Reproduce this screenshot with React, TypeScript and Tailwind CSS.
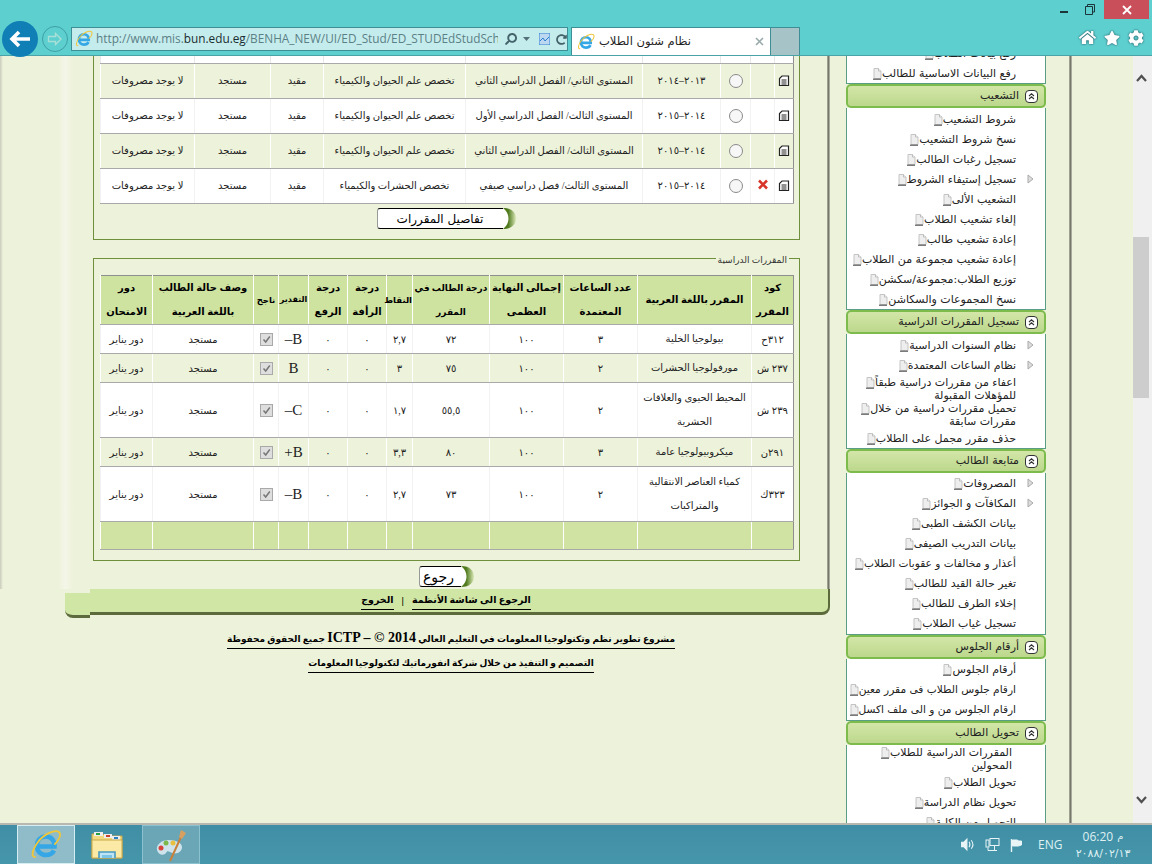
import React from "react";
import { FaHome, FaStar, FaCog, FaSearch, FaRedoAlt } from "react-icons/fa";

const SERIF = "[font-family:'Liberation_Serif','DejaVu_Sans',serif]";

function IE({ size }: { size: number }) {
  return (
    <svg width={size} height={size} viewBox="0 0 32 32" fill="none">
      <path d="M8.5 17.5H24.5C25 11 20.5 7.5 16 7.5C10.5 7.5 7 11.5 7 17C7 22.5 11 26 16 26C19.5 26 22.5 24.5 24 21.5" stroke="#35a7e6" strokeWidth="4.6" />
      <path d="M5 28C1 28 2 21 8 13C14 5 25 0 29 3C32 6 28 12 25 15" stroke="#f0c63a" strokeWidth="1.8" strokeLinecap="round" />
    </svg>
  );
}

function PageIcon() {
  return (
    <svg className="inline-block align-top mt-[1px]" width="9" height="12" viewBox="0 0 9 12">
      <path d="M1 .5H5.5L8 3V10.5H1Z" fill="#eeeeee" stroke="#c4c4c4" />
      <path d="M5.5 .5V3H8" fill="#ffffff" stroke="#bdbdbd" />
      <path d="M0 11.2H8" stroke="#5a5a5a" strokeWidth="1.2" />
    </svg>
  );
}

function DocIcon() {
  return (
    <svg className="mx-auto block" width="12" height="12" viewBox="0 0 12 12" fill="none">
      <path d="M4 1H10.5V10.5H1.5V3.5Z" stroke="#222" strokeWidth="1.2" fill="#fff" />
      <path d="M3.5 5H8.5M3.5 7H8.5M3.5 9H8.5" stroke="#222" strokeWidth="1" />
    </svg>
  );
}

function Crescent({ id }: { id: string }) {
  return (
    <svg className="block shrink-0" width="20" height="21" viewBox="0 0 20 21">
      <defs>
        <linearGradient id={id} x1="0.4" y1="0" x2="1" y2="0">
          <stop offset="0" stopColor="#4f7a1e" />
          <stop offset="1" stopColor="#dbe9b8" />
        </linearGradient>
      </defs>
      <path d="M0 0H6C10 3 11.5 7 11.5 10.5C11.5 14 10 18 6 21H0Z" fill="#ffffff" />
      <path d="M0 .5H6M0 20.5H6" stroke="#000" />
      <path d="M6 0C15 0 19 5 19 10.5C19 16 15 21 6 21C10 18 11.5 14 11.5 10.5C11.5 7 10 3 6 0Z" fill={`url(#${id})`} />
    </svg>
  );
}

function PillButton({ label, w, cls, id }: { label: string; w: string; cls: string; id: string }) {
  return (
    <button dir="ltr" className={`flex h-[21px] ${w} mx-auto`}>
      <span dir="rtl" className={`flex-1 h-full bg-white border-y border-l border-black border-l-[#999] rounded-l-[3px] leading-[20px] text-black text-center [font-family:'DejaVu_Sans',sans-serif] ${cls}`}>
        {label}
      </span>
      <Crescent id={id} />
    </button>
  );
}

const t1Widths = [19, 24, 30, 78, 177, 142, 53, 76, 94];
const t1Rows = [
  { y: "٢٠١٣–٢٠١٤", l: "المستوى الثاني/ الفصل الدراسي الثاني", s: "تخصص علم الحيوان والكيمياء", x: false },
  { y: "٢٠١٤–٢٠١٥", l: "المستوى الثالث/ الفصل الدراسي الأول", s: "تخصص علم الحيوان والكيمياء", x: false },
  { y: "٢٠١٤–٢٠١٥", l: "المستوى الثالث/ الفصل الدراسي الثاني", s: "تخصص علم الحيوان والكيمياء", x: false },
  { y: "٢٠١٤–٢٠١٥", l: "المستوى الثالث/ فصل دراسي صيفي", s: "تخصص الحشرات والكيمياء", x: true },
];

const t2Widths = [42, 114, 74, 74, 77, 26, 39, 39, 30, 25, 101, 52];
const t2Head: { t: React.ReactNode; c?: string }[] = [
  { t: <>كود<br />المقرر</> },
  { t: "المقرر باللغة العربية" },
  { t: <>عدد الساعات<br />المعتمدة</> },
  { t: <>إجمالى النهاية<br />العظمى</> },
  { t: <>درجة الطالب في<br />المقرر</>, c: "text-[9px] whitespace-nowrap" },
  { t: "النقاط", c: "text-[8.5px]" },
  { t: <>درجة<br />الرأفة</> },
  { t: <>درجة<br />الرفع</> },
  { t: "التقدير", c: "text-[8px]" },
  { t: "ناجح", c: "text-[8.5px]" },
  { t: <>وصف حالة الطالب<br />باللغة العربية</> },
  { t: <>دور<br />الامتحان</> },
];
const t2Rows = [
  { h: "h-[29px]", c: "٣١٢ح", n: "بيولوجيا الخلية", hrs: "٣", g: "٧٢", p: "٢,٧", e: "B–" },
  { h: "h-[29px]", c: "٢٣٧ ش", n: "مورفولوجيا الحشرات", hrs: "٢", g: "٧٥", p: "٣", e: "B" },
  { h: "h-[55px]", c: "٢٣٩ ش", n: "المحيط الحيوى والعلاقات الحشرية", hrs: "٢", g: "٥٥,٥", p: "١,٧", e: "C–" },
  { h: "h-[29px]", c: "٢٩١ن", n: "ميكروبيولوجيا عامة", hrs: "٣", g: "٨٠", p: "٣,٣", e: "B+" },
  { h: "h-[55px]", c: "٣٢٣ك", n: "كمياء العناصر الانتقالية والمتراكبات", hrs: "٢", g: "٧٣", p: "٢,٧", e: "B–" },
];

const cell = "border-b border-l border-b-[#a9a9a9] p-0 text-center";

function Table1() {
  return (
    <table dir="rtl" className={`w-[693px] table-fixed border-collapse border border-t-0 border-[#8f8f8f] text-[10px] text-[#222] ${SERIF}`}>
      <colgroup>
        {t1Widths.map((w, i) => (
          <col key={i} style={{ width: w }} />
        ))}
      </colgroup>
      <tbody>
        <tr className="bg-white">
          {t1Widths.map((_, i) => (
            <td key={i} className={`${cell} h-[7px] border-l-[#e8e8e8]`} />
          ))}
        </tr>
        {t1Rows.map((r, i) => {
          const b = i % 2 === 0 ? "bg-[#edf2da] border-l-white" : "bg-white border-l-[#f2f2f2]";
          const cl = `${cell} ${b}`;
          return (
            <tr key={i} className="h-[35px]">
              <td className={cl}><DocIcon /></td>
              <td className={cl}>
                {r.x && (
                  <svg className="mx-auto block -mt-[2px]" width="12" height="11" viewBox="0 0 12 11">
                    <path d="M2 1.5L10 9.5M10 1.5L2 9.5" stroke="#d8352a" strokeWidth="2.6" />
                  </svg>
                )}
              </td>
              <td className={cl}><span className="block mx-auto w-[14px] h-[14px] rounded-full border border-[#8a8a8a] bg-[#f7f7f7]" /></td>
              <td className={cl}>{r.y}</td>
              <td className={cl}>{r.l}</td>
              <td className={cl}>{r.s}</td>
              <td className={cl}>مقيد</td>
              <td className={cl}>مستجد</td>
              <td className={cl}>لا يوجد مصروفات</td>
            </tr>
          );
        })}
      </tbody>
    </table>
  );
}

function Table2() {
  return (
    <table dir="rtl" className={`w-[693px] table-fixed border-collapse border border-[#8f8f8f] text-[10px] text-[#222] ${SERIF}`}>
      <colgroup>
        {t2Widths.map((w, i) => (
          <col key={i} style={{ width: w }} />
        ))}
      </colgroup>
      <thead>
        <tr className="h-[49px] bg-[#cfe3a0]">
          {t2Head.map((h, i) => (
            <th key={i} className={`${cell} border-l-white font-bold leading-[24px] text-black ${h.c ?? "text-[10px]"}`}>{h.t}</th>
          ))}
        </tr>
      </thead>
      <tbody>
        {t2Rows.map((r, i) => {
          const b = i % 2 === 0 ? "bg-white border-l-[#f2f2f2]" : "bg-[#edf2da] border-l-white";
          const cl = `${cell} ${b}`;
          return (
            <tr key={i} className={r.h}>
              <td className={cl}>{r.c}</td>
              <td className={`${cl} leading-[24px]`}>{r.n}</td>
              <td className={cl}>{r.hrs}</td>
              <td className={cl}>١٠٠</td>
              <td className={cl}>{r.g}</td>
              <td className={cl}>{r.p}</td>
              <td className={cl}>٠</td>
              <td className={cl}>٠</td>
              <td className={`${cl} text-[15px]`}>{r.e}</td>
              <td className={cl}>
                <span className="mx-auto flex items-center justify-center w-[13px] h-[13px] bg-[#dedede] border border-[#a9a9a9]">
                  <svg width="9" height="9" viewBox="0 0 9 9" fill="none"><path d="M1.5 4.5L3.7 7L7.8 1.5" stroke="#777" strokeWidth="1.5" /></svg>
                </span>
              </td>
              <td className={cl}>مستجد</td>
              <td className={cl}>دور يناير</td>
            </tr>
          );
        })}
        <tr className="h-[28px] bg-[#d0e3a2]">
          {t2Widths.map((_, i) => (
            <td key={i} className={`${cell} border-l-white`} />
          ))}
        </tr>
      </tbody>
    </table>
  );
}

type Item = { t: React.ReactNode; arrow?: boolean; h?: string; pr?: string; fs?: string };

function Row({ it }: { it: Item }) {
  return (
    <div className={`flex items-center ${it.h ?? "h-[20px]"} ${it.fs ?? "text-[11px]"} leading-[13px] text-[#222]`}>
      <span className={`${it.pr ?? "w-[29px]"} shrink-0 flex justify-center`}>
        {it.arrow && (
          <svg width="7" height="10" viewBox="0 0 7 10"><path d="M1 1L6 5L1 9Z" fill="#ddd" stroke="#aaa" /></svg>
        )}
      </span>
      <span className="whitespace-nowrap">{it.t}</span>
    </div>
  );
}

function Section({ title, items, tight }: { title?: string; items: Item[]; tight?: boolean }) {
  return (
    <div>
      {title && (
        <div className="h-[24px] flex items-center gap-[6px] pr-[6px] rounded-[5px] border-2 border-[#7cbb4c] bg-linear-to-b from-[#d3e6a8] to-[#bcd88c] text-[11px] text-[#222]">
          <span className="w-[13px] h-[13px] rounded-[4px] border border-[#333] bg-white flex items-center justify-center">
            <svg width="7" height="7" viewBox="0 0 7 7"><path d="M1 3L3.5 .8L6 3M1 6L3.5 3.8L6 6" fill="none" stroke="#333" strokeWidth="1.1" /></svg>
          </span>
          <span>{title}</span>
        </div>
      )}
      <div className={`border-x border-b border-[#5a9e85] bg-white ${tight ? "pb-[1px]" : "pt-[1px]"}`}>
        {items.map((it, i) => (
          <Row key={i} it={it} />
        ))}
      </div>
    </div>
  );
}

const P = () => <PageIcon />;
const it = (s: string, extra: Partial<Item> = {}): Item => ({ t: <>{s}<P /></>, ...extra });

function Sidebar() {
  return (
    <div className="w-[200px] h-[767px] overflow-hidden shrink-0" dir="rtl">
      <div className="-mt-[14px] [font-family:'DejaVu_Sans',sans-serif]">
        <Section items={[it("رفع بيانات الطلاب"), it("رفع البيانات الاساسية للطالب")]} />
        <Section title="التشعيب" items={[
          it("شروط التشعيب"), it("نسخ شروط التشعيب"), it("تسجيل رغبات الطالب"), it("تسجيل إستيفاء الشروط", { arrow: true }),
          it("التشعيب الألى"), it("إلغاء تشعيب الطلاب"), it("إعادة تشعيب طالب"), it("إعادة تشعيب مجموعة من الطلاب"),
          it("توزيع الطلاب:مجموعة/سكشن"), it("نسخ المجموعات والسكاشن"),
        ]} />
        <Section title="تسجيل المقررات الدراسية" items={[
          it("نظام السنوات الدراسية", { arrow: true }), it("نظام الساعات المعتمدة", { arrow: true }),
          { t: <>اعفاء من مقررات دراسية طبقاً<P /><br />للمؤهلات المقبولة</>, h: "h-[27px]" },
          { t: <>تحميل مقررات دراسية من خلال<P /><br />مقررات سابقة</>, h: "h-[26px]" },
          it("حذف مقرر مجمل على الطلاب"),
        ]} />
        <Section tight title="متابعة الطالب" items={[
          it("المصروفات", { arrow: true }), it("المكافآت و الجوائز", { arrow: true }), it("بيانات الكشف الطبى"), it("بيانات التدريب الصيفى"),
          it("أعذار و مخالفات و عقوبات الطلاب", { fs: "text-[10.6px]" }), it("تغير حالة القيد للطالب"), it("إخلاء الطرف للطالب"), it("تسجيل غياب الطلاب"),
        ]} />
        <Section tight title="أرقام الجلوس" items={[
          it("أرقام الجلوس"), it("ارقام جلوس الطلاب فى مقرر معين", { fs: "text-[10.6px]" }), it("ارقام الجلوس من و الى ملف اكسل", { fs: "text-[10.6px]" }),
        ]} />
        <Section title="تحويل الطالب" items={[
          { t: <>المقررات الدراسية للطلاب<P /><br />المحولين</>, h: "h-[26px]", pr: "w-[33px]" },
          it("تحويل الطلاب"), it("تحويل نظام الدراسة"), it("التحويل من الكلية"),
        ]} />
      </div>
    </div>
  );
}

const rule = "w-[3px] shrink-0 bg-linear-to-r from-[#b4b7a5] via-[#75776b] to-[#c4c7b5]";

export default function App() {
  return (
    <div className="w-[1152px] h-[864px] overflow-hidden bg-[#5ecfcf] flex flex-col" dir="ltr">
      {/* title row */}
      <div className="h-[27px] flex justify-end shrink-0 pr-[3px]">
        <div className="w-[8px] h-[2px] bg-[#1b3538] mt-[11px] mr-[17px]" />
        <svg className="mt-[4px] mr-[9px]" width="10" height="11" viewBox="0 0 10 11" fill="none" stroke="#1b3538"><path d="M2.5 2.5V.5H9.5V8H7.5" /><path d="M.5 2.5H7.5V10.5H.5Z" /></svg>
        <div className="w-[45px] h-[19px] bg-[#c9505a] flex items-center justify-center">
          <svg width="10" height="10" viewBox="0 0 10 10"><path d="M1 1L9 9M9 1L1 9" stroke="#fff" strokeWidth="1.8" /></svg>
        </div>
      </div>
      {/* toolbar row */}
      <div className="h-[29px] shrink-0 flex items-start border-b border-[#4aa3a6]">
        <div className="w-[36px] h-[36px] ml-[2px] -mt-[6px] rounded-full bg-[#0f7fb5] flex items-center justify-center relative z-10">
          <svg width="22" height="18" viewBox="0 0 22 18" fill="none"><path d="M10 2L3 9L10 16M3 9H21" stroke="#fff" strokeWidth="3.6" /></svg>
        </div>
        <div className="w-[26px] h-[26px] ml-[4px] -mt-[1px] rounded-full border border-[#3d9fa5] flex items-center justify-center">
          <svg width="16" height="14" viewBox="0 0 16 14" fill="none"><path d="M8.5 1.5L14 7L8.5 12.5V9.5H1.5V4.5H8.5Z" stroke="#a8e0d8" strokeWidth="1.4" /></svg>
        </div>
        <div className="w-[497px] h-[24px] ml-[3px] flex items-center border border-[#3d8f95] bg-[#c5ecec]">
          <span className="w-[24px] flex justify-center shrink-0"><IE size={18} /></span>
          <span className="w-[402px] overflow-hidden whitespace-nowrap text-[11.8px] text-[#5a8086] [font-family:'Open_Sans',sans-serif]">
            http://www.mis.<span className="text-[#1a2c30]">bun.edu.eg</span>/BENHA_NEW/UI/ED_Stud/ED_STUDEdStudSchc
          </span>
          <span className="ml-[7px] flex items-center gap-[6px] text-[#44626a]">
            <FaSearch size={12} className="-scale-x-100" />
            <svg width="7" height="4" viewBox="0 0 7 4"><path d="M0 0H7L3.5 4Z" fill="#55707a" /></svg>
            <svg className="ml-[3px]" width="11" height="12" viewBox="0 0 11 12"><rect width="11" height="12" fill="#bcd8f0" stroke="#2f7fd0" /><path d="M1 8L4 5L6 8L10 4" stroke="#2f7fd0" fill="none" /></svg>
            <FaRedoAlt size={11} />
          </span>
        </div>
        <div className="w-[200px] h-[28px] ml-[3px] flex items-center bg-white border border-b-0 border-[#3d8f95] pl-[5px] pr-[6px]">
          <IE size={18} />
          <span dir="rtl" className="ml-[4px] text-[11.5px] text-[#222] [font-family:'DejaVu_Sans',sans-serif]">نظام شئون الطلاب</span>
          <svg className="ml-auto" width="9" height="9" viewBox="0 0 9 9"><path d="M1 1L8 8M8 1L1 8" stroke="#9aa" strokeWidth="1.6" /></svg>
        </div>
        <div className="w-[29px] h-[28px] bg-[#a6c4c8] border border-l-0 border-b-0 border-[#3d8f95]" />
        <div className="ml-auto flex items-center gap-[8px] pr-[8px] mt-[2px] text-white">
          <FaHome size={17} className="drop-shadow-[0_0_1px_#1b4a55]" />
          <FaStar size={16} className="drop-shadow-[0_0_1px_#1b4a55]" />
          <FaCog size={16} className="drop-shadow-[0_0_1px_#1b4a55]" />
        </div>
      </div>

      {/* content */}
      <div className="h-[767px] shrink-0 flex bg-[#edf2da]">
        <div className="w-[830px] shrink-0 flex flex-col">
          <div className="h-[533px] flex shrink-0 overflow-hidden">
            <div className="w-[93px] shrink-0 bg-[linear-gradient(to_right,#c9ccbb_0,#edf2da_3px,#edf2da_58px,#f4f6e8_65px,#edf2da_74px)]" />
            <div className="w-[707px] shrink-0">
              <div className="border-x border-b border-[#6f8f3c] px-[6px] h-[184px]">
                <Table1 />
                <div className="mt-[4px]"><PillButton id="cr1" label="تفاصيل المقررات" w="w-[140px]" cls="text-[12px] pl-[6px]" /></div>
              </div>
              <div className={`relative mt-[18px] border border-[#6f8f3c] px-[6px] pt-[16px] pb-[10px] ${SERIF}`}>
                <span dir="rtl" className="absolute -top-[6px] right-[10px] bg-[#edf2da] px-[2px] text-[9px] leading-[14px] text-[#333]">المقررات الدراسية</span>
                <Table2 />
              </div>
              <div className="mt-[5px]"><PillButton id="cr2" label="رجوع" w="w-[56px]" cls="text-[14px] pl-[3px]" /></div>
            </div>
            <div className="w-[27px] shrink-0" />
            <div className={rule} />
          </div>
          <div className="h-[29px] flex items-start shrink-0">
            <div className="w-[25px] ml-[65px] mt-[4px] h-[25px] rounded-bl-[8px] bg-[#cfe6a5] border-b-[3px] border-[#5d6b3c]" />
            <div dir="rtl" className={`h-[26px] flex-1 rounded-br-[8px] bg-[#cfe6a5] border-b-[3px] border-r-[2px] border-[#5d6b3c] flex items-start justify-center gap-[8px] pr-[26px] text-[9.5px] font-bold text-black ${SERIF}`}>
              <span className="mt-[2px] border-b border-black leading-[18px]">الرجوع الى شاشة الأنظمة</span>
              <span className="mt-[2px] leading-[18px] text-[11px]">|</span>
              <span className="mt-[2px] border-b border-black leading-[18px]">الخروج</span>
            </div>
          </div>
          <div dir="rtl" className={`flex flex-col items-center text-[9px] font-bold text-black pt-[12px] pl-[72px] gap-[6px] ${SERIF}`}>
            <span className="border-b border-black pb-[1px] leading-[16px]">مشروع تطوير نظم وتكنولوجيا المعلومات في التعليم العالي <span className="text-[14px]">ICTP – © 2014</span> جميع الحقوق محفوظة</span>
            <span className="border-b border-black pb-[1px] leading-[16px]">التصميم و التنفيذ من خلال شركة انفورماتيك لتكنولوجيا المعلومات</span>
          </div>
        </div>

        <div className="w-[242px] shrink-0 flex pl-[16px]">
          <Sidebar />
          <div className="w-[23px] shrink-0" />
          <div className={rule} />
        </div>

        <div className="w-[61px] shrink-0" />

        <div className="w-[19px] shrink-0 bg-[#f0f0f0] flex flex-col pr-[3px] items-center">
          <svg className="mt-[18px]" width="11" height="8" viewBox="0 0 11 8" fill="none"><path d="M1 7L5.5 2L10 7" stroke="#505050" strokeWidth="2.2" /></svg>
          <div className="w-[16px] h-[161px] mt-[155px] bg-[#cdcdcd]" />
          <svg className="mt-auto mb-[19px]" width="11" height="8" viewBox="0 0 11 8" fill="none"><path d="M1 1L5.5 6L10 1" stroke="#505050" strokeWidth="2.2" /></svg>
        </div>
      </div>

      {/* taskbar */}
      <div className="h-[41px] shrink-0 border-t-2 border-[#b8b8b0] bg-linear-to-b from-[#3f8ea5] to-[#4696ab] flex items-stretch [font-family:'Open_Sans',sans-serif]">
        <div className="w-[58px] ml-[17px] bg-[#8fbcc8] border border-[#d6eef2] flex items-center justify-center"><IE size={32} /></div>
        <div className="w-[34px] ml-[16px] flex items-center">
          <svg width="32" height="30" viewBox="0 0 32 30">
            <path d="M1 4H12L14 6H31V28H1Z" fill="#f2d980" stroke="#c9a94a" />
            <rect x="3" y="2" width="9" height="4" fill="#eee" />
            <rect x="5" y="3" width="4" height="2" fill="#22a040" />
            <rect x="13" y="4" width="8" height="4" fill="#eee" />
            <rect x="15" y="5" width="4" height="2" fill="#c84030" />
            <rect x="21" y="6" width="8" height="4" fill="#eee" />
            <rect x="23" y="7" width="4" height="2" fill="#2a80c0" />
            <path d="M1 10H31V28H1Z" fill="#fbe9a6" stroke="#c9a94a" />
            <path d="M8 28V22H24V28" fill="#bde4f5" stroke="#4a9ac0" strokeWidth="1.6" />
            <path d="M11 28V25H21V28" fill="#7cc4e8" />
          </svg>
        </div>
        <div className="w-[58px] ml-[17px] bg-[#6aa6b6] border border-[#8cc2cf] flex items-center justify-center">
          <svg width="32" height="34" viewBox="0 0 32 34">
            <path d="M14 12C6 12 1 17 2 22C3 27 9 28 11 25C12 23 13 23 15 24C20 27 27 25 27 19C27 15 21 12 14 12Z" fill="#cfe3ec" />
            <circle cx="6" cy="20" r="2.5" fill="#d8443c" />
            <circle cx="11" cy="15" r="2.5" fill="#7cb84a" />
            <circle cx="18" cy="15" r="2.5" fill="#e8c040" />
            <path d="M15 33L26 9" stroke="#c8803a" strokeWidth="2" />
            <path d="M24 9L26 2L31 5L27 11Z" fill="#d8a060" />
          </svg>
        </div>
        <div className="ml-auto flex items-center text-[#dff0f2]">
          <svg width="16" height="15" viewBox="0 0 14 14" fill="none" stroke="#e8f4f6"><path d="M1 5H3L6 2V12L3 9H1Z" fill="#e8f4f6" /><path d="M8 4.5C9 6 9 8 8 9.5M10 3C12 5.5 12 8.5 10 11" /></svg>
          <svg className="ml-[9px]" width="15" height="15" viewBox="0 0 15 15" fill="none" stroke="#e8f4f6"><rect x="5" y="1.5" width="9" height="7" /><rect x="1" y="3" width="3" height="7" /><path d="M3 10.5V13.5H12M9.5 9V13" /></svg>
          <svg className="ml-[9px]" width="15" height="14" viewBox="0 0 14 14" fill="none" stroke="#e8f4f6"><path d="M2 1V14" strokeWidth="1.4" /><path d="M3 2H8L9 3H12V7L9 8H3Z" fill="#e8f4f6" /></svg>
          <span className="ml-[14px] text-[12px] w-[37px]">ENG</span>
          <div className="w-[56px] mr-[21px] flex flex-col items-center text-[12px] leading-[17px]">
            <span className="flex gap-[4px]"><span>06:20</span><span className="[font-family:'DejaVu_Sans',sans-serif] text-[10px]">م</span></span>
            <span className="whitespace-nowrap [font-family:'DejaVu_Sans',sans-serif] text-[11px]">٢٠٨٨/٠٢/١٣</span>
          </div>
        </div>
      </div>
    </div>
  );
}
